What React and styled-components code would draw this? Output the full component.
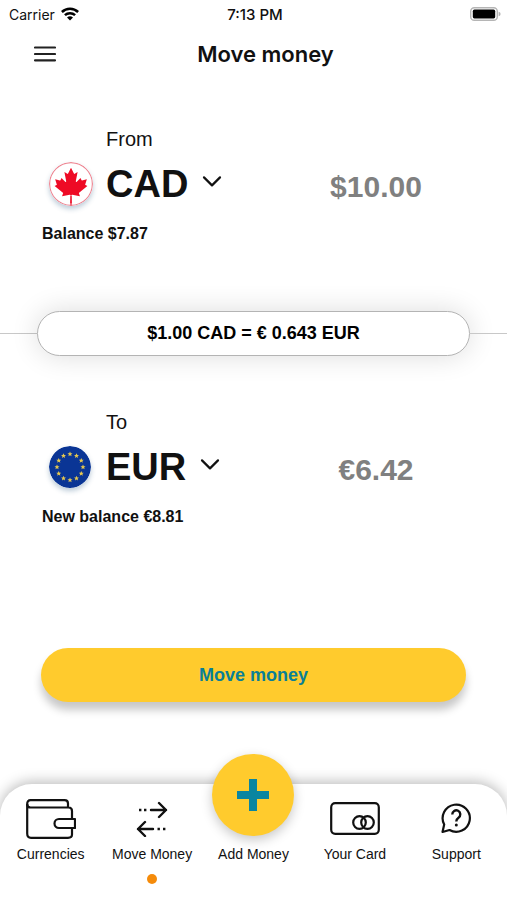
import { useState } from 'react';
import styled, { createGlobalStyle, css } from 'styled-components';

const colors = {
  ink: '#111111',
  muted: '#808080',
  line: '#b4b4b4',
  yellow: '#ffcb2d',
  teal: '#0a7f96',
  orange: '#f58b0a',
};

const GlobalStyle = createGlobalStyle`
  * {
    box-sizing: border-box;
  }
  body {
    margin: 0;
    background: #fff;
    color: ${colors.ink};
    font-family: 'Liberation Sans', Arial, sans-serif;
  }
  button,
  input,
  select {
    margin: 0;
    padding: 0;
    border: 0;
    background: none;
    color: inherit;
    font-family: inherit;
  }
`;

const Screen = styled.div`
  display: flex;
  flex-direction: column;
  min-height: 100vh;
  overflow: hidden;
`;

const StatusBar = styled.div`
  display: grid;
  grid-template-columns: 1fr auto 1fr;
  align-items: center;
  height: 28px;
  padding: 0 6px 0 9px;
  font-family: Inter, sans-serif;
  font-size: 14px;
`;

const Carrier = styled.div`
  display: flex;
  align-items: center;
  gap: 6px;
`;

const Time = styled.time`
  font-size: 15px;
  font-weight: 500;
`;

const Battery = styled.svg`
  justify-self: end;
`;

const Header = styled.header`
  display: grid;
  grid-template-columns: 32px 1fr 32px;
  align-items: center;
  height: 52px;
  padding: 0 29px;
`;

const MenuButton = styled.button`
  display: flex;
  justify-content: center;
  cursor: pointer;
`;

const Title = styled.h1`
  margin: 0 0 0 24px;
  font-family: Inter, sans-serif;
  font-size: 22px;
  font-weight: 600;
  line-height: 28px;
  text-align: center;
`;

const Main = styled.main`
  display: flex;
  flex-direction: column;
  flex: 1;
  padding: 47px 0 82px;
`;

const Account = styled.section`
  display: grid;
  grid-template-columns: 64px 1fr 180px;
  align-items: baseline;
  padding: 0 41px 0 42px;
`;

const Label = styled.label`
  grid-column: 2 / 4;
  margin-bottom: 9px;
  font-size: 20px;
  line-height: 24px;
`;

const FlagSvg = styled.svg`
  align-self: center;
  margin-left: 7px;
  border-radius: 50%;
  box-shadow: 0 3px 5px rgba(40, 90, 130, 0.3);
`;

const CurrencyPicker = styled.div`
  display: flex;
  align-items: baseline;
  gap: 14px;
  svg {
    align-self: center;
    pointer-events: none;
  }
`;

const CurrencySelect = styled.select`
  appearance: none;
  field-sizing: content;
  height: 48px;
  font-size: 38px;
  font-weight: 700;
  line-height: 48px;
  cursor: pointer;
`;

const Amount = styled.input`
  width: 100%;
  color: ${colors.muted};
  font-size: 30px;
  font-weight: 700;
  line-height: 36px;
  text-align: center;
`;

const Balance = styled.p`
  grid-column: 1 / 4;
  margin: 16px 0 0;
  font-size: 16px;
  font-weight: 700;
  line-height: 20px;
`;

const RateRow = styled.div`
  display: flex;
  align-items: center;
  margin: 67px 0 54px;
  &::before,
  &::after {
    content: '';
    width: 37px;
    height: 1px;
    background: #c8c8c8;
  }
`;

const Rate = styled.div`
  flex: 1;
  border: 1px solid ${colors.line};
  border-radius: 24px;
  background: #fff;
  box-shadow: 0 0 28px rgba(0, 0, 0, 0.14);
  color: #000;
  font-size: 18px;
  font-weight: 700;
  line-height: 43px;
  text-align: center;
`;

const SubmitButton = styled.button`
  margin: auto 41px 0;
  height: 54px;
  border-radius: 27px;
  background: ${colors.yellow};
  box-shadow: 0 8px 9px rgba(0, 0, 0, 0.22);
  color: ${colors.teal};
  font-size: 18px;
  font-weight: 700;
  cursor: pointer;
`;

const TabBar = styled.nav`
  display: grid;
  grid-template-columns: repeat(5, 1fr);
  height: 116px;
  border-radius: 32px 32px 0 0;
  background: #fff;
  box-shadow: 0 -2px 14px rgba(0, 0, 0, 0.28);
`;

const Tab = styled.a`
  display: flex;
  flex-direction: column;
  align-items: center;
  color: ${colors.ink};
  font-size: 14px;
  line-height: 18px;
  text-decoration: none;
  white-space: nowrap;
  ${({ $active }) =>
    $active &&
    css`
      &::after {
        content: '';
        width: 10px;
        height: 10px;
        margin-top: 11px;
        border-radius: 50%;
        background: ${colors.orange};
      }
    `}
`;

const TabIcon = styled.span`
  display: flex;
  align-items: center;
  justify-content: center;
  height: 61px;
  padding-top: 8px;
`;

const AddCircle = styled.span`
  display: flex;
  align-items: center;
  justify-content: center;
  width: 82px;
  height: 82px;
  margin: -30px 0 9px;
  border-radius: 50%;
  background: ${colors.yellow};
  box-shadow: 0 4px 12px rgba(0, 0, 0, 0.22);
`;

const WifiIcon = () => (
  <svg width="18" height="14" viewBox="0 0 18 14" aria-hidden="true">
    <g fill="none" stroke="#000" strokeWidth="2.5">
      <path d="M0.9 5a11.6 11.6 0 0 1 16.2 0" />
      <path d="M3.9 8.2a7.4 7.4 0 0 1 10.2 0" />
    </g>
    <path d="M9 13.6 6 10.6a4.3 4.3 0 0 1 6 0z" />
  </svg>
);

const BatteryIcon = () => (
  <Battery width="31" height="14" viewBox="0 0 31 14" aria-label="Battery full">
    <rect x="0.7" y="0.7" width="26.6" height="12.6" rx="3.6" fill="#fff" stroke="#b5b5b5" strokeWidth="1.4" />
    <rect x="2.8" y="2.6" width="22.4" height="8.8" rx="1.6" />
    <path d="M28.6 4.8q2 .5 2 2.2t-2 2.2z" fill="#b5b5b5" />
  </Battery>
);

const MenuIcon = () => (
  <svg width="22" height="18" viewBox="0 0 22 18" aria-hidden="true">
    <path d="M1 2.5h20M1 9h20M1 15.3h20" stroke="#222" strokeWidth="2.2" strokeLinecap="round" />
  </svg>
);

const ChevronIcon = () => (
  <svg width="20" height="20" viewBox="0 0 20 20" aria-hidden="true">
    <path
      d="M2 3.4 10 11.4 18 3.4"
      fill="none"
      stroke={colors.ink}
      strokeWidth="2.2"
      strokeLinecap="round"
      strokeLinejoin="round"
    />
  </svg>
);

const CanadaFlag = () => (
  <FlagSvg width="44" height="44" viewBox="0 0 44 44" aria-hidden="true">
    <circle cx="22" cy="22" r="21.4" fill="#fff" stroke="#ee8592" strokeWidth="1.2" />
    <path d="M22 34v9.4" stroke="#e8344a" strokeWidth="1.3" />
    <path
      transform="translate(22 23.4) scale(.0088)"
      fill="#ee0a25"
      d="m-90 2030 45-863a95 95 0 0 0-111-98l-859 151 116-320a65 65 0 0 0-20-73l-941-762 212-99a65 65 0 0 0 34-79l-186-572 542 115a65 65 0 0 0 73-38l105-247 423 454a65 65 0 0 0 111-57l-204-1052 327 189a65 65 0 0 0 91-27l332-652 332 652a65 65 0 0 0 91 27l327-189-204 1052a65 65 0 0 0 111 57l423-454 105 247a65 65 0 0 0 73 38l542-115-186 572a65 65 0 0 0 34 79l212 99-941 762a65 65 0 0 0-20 73l116 320-859-151a95 95 0 0 0-111 98l45 863z"
    />
  </FlagSvg>
);

const STAR = 'M0-2.6.8-.8 2.5-.8 1.1.5 1.6 2.200 0 1.200-1.600 2.200-1.100.5-2.500-.8-.8-.8z';

const EuropeFlag = () => (
  <FlagSvg width="42" height="42" viewBox="0 0 42 42" aria-hidden="true">
    <circle cx="21" cy="21" r="21" fill="#0a3595" />
    {Array.from({ length: 12 }, (_, i) => {
      const angle = (i * Math.PI) / 6;
      const x = 21 + 13 * Math.sin(angle);
      const y = 21 - 13 * Math.cos(angle);
      return <path key={i} d={STAR} transform={`translate(${x} ${y})`} fill="#e6c84f" />;
    })}
  </FlagSvg>
);

const WalletIcon = () => (
  <svg width="50" height="40" viewBox="0 0 50 40" fill="none" stroke="#111" strokeWidth="2.2" aria-hidden="true">
    <path d="M46 20.5V12Q46 8.500 42.500 8.500H4.500Q1.200 8.500 1.200 5 1.200 1.200 4.500 1.200H38.500Q42 1.200 42 4.500V8.500" />
    <path d="M1.200 5V34.500Q1.200 38.800 5 38.800H42Q46 38.800 46 35.500V29" />
    <path d="M49 20H33a4.500 4.500 0 0 0 0 9H49z" strokeLinejoin="round" />
  </svg>
);

const TransferIcon = () => (
  <svg width="32" height="36" viewBox="0 0 32 36" fill="none" stroke="#111" strokeWidth="2.4" aria-hidden="true">
    <path d="M15 9H30M23 2l7 7-7 7M17 28H2M9 21l-7 7 7 7" strokeLinecap="round" strokeLinejoin="round" />
    <path d="M3 9h2.400M8 9h2.400M21.500 28h2.400M27 28h2.400" />
  </svg>
);

const CardIcon = () => (
  <svg width="50" height="33" viewBox="0 0 50 33" fill="none" stroke="#111" strokeWidth="2.2" aria-hidden="true">
    <rect x="1.2" y="1.2" width="47.6" height="30.6" rx="4" />
    <circle cx="29.500" cy="20.500" r="6.300" />
    <circle cx="37.500" cy="20.500" r="6.300" />
  </svg>
);

const SupportIcon = () => (
  <svg width="30" height="31" viewBox="0 0 30 31" fill="none" stroke="#111" strokeWidth="2.2" aria-hidden="true">
    <path d="M3.200 21.500A13.600 13.600 0 1 1 8.500 27L1.500 29z" strokeLinejoin="round" />
    <path d="M11.300 11.500a4 4 0 1 1 6.200 3.200Q15.300 16.200 15.300 18.600" strokeWidth="2.400" />
    <circle cx="15.300" cy="22" r="1.500" fill="#111" stroke="none" />
  </svg>
);

const PlusIcon = () => (
  <svg width="34" height="34" viewBox="0 0 34 34" aria-hidden="true">
    <path d="M17 1v32M1 17h32" stroke="#0a85a0" strokeWidth="8" />
  </svg>
);

const tabs = [
  { label: 'Currencies', icon: <WalletIcon /> },
  { label: 'Move Money', icon: <TransferIcon />, active: true },
  { label: 'Add Money', primary: true },
  { label: 'Your Card', icon: <CardIcon /> },
  { label: 'Support', icon: <SupportIcon /> },
];

const CurrencyAccount = ({ id, label, flag, currency, amount, balance }) => {
  const [code, setCode] = useState(currency);
  const [value, setValue] = useState(amount);

  return (
    <Account>
      <Label htmlFor={id}>{label}</Label>
      {flag}
      <CurrencyPicker>
        <CurrencySelect id={id} value={code} onChange={(e) => setCode(e.target.value)}>
          <option>CAD</option>
          <option>EUR</option>
        </CurrencySelect>
        <ChevronIcon />
      </CurrencyPicker>
      <Amount
        type="text"
        aria-label={`${label} amount`}
        value={value}
        onChange={(e) => setValue(e.target.value)}
      />
      <Balance>{balance}</Balance>
    </Account>
  );
};

const App = () => {
  return (
    <Screen>
      <GlobalStyle />
      <StatusBar>
        <Carrier>
          Carrier
          <WifiIcon />
        </Carrier>
        <Time>7:13 PM</Time>
        <BatteryIcon />
      </StatusBar>
      <Header>
        <MenuButton type="button" aria-label="Menu">
          <MenuIcon />
        </MenuButton>
        <Title>Move money</Title>
      </Header>

      <Main>
        <CurrencyAccount
          id="from"
          label="From"
          flag={<CanadaFlag />}
          currency="CAD"
          amount="$10.00"
          balance="Balance $7.87"
        />
        <RateRow>
          <Rate>$1.00 CAD = € 0.643 EUR</Rate>
        </RateRow>
        <CurrencyAccount
          id="to"
          label="To"
          flag={<EuropeFlag />}
          currency="EUR"
          amount="€6.42"
          balance="New balance €8.81"
        />
        <SubmitButton type="button">Move money</SubmitButton>
      </Main>

      <TabBar>
        {tabs.map(({ label, icon, active, primary }) => (
          <Tab key={label} href="#" $active={active} aria-current={active ? 'page' : undefined}>
            {primary ? (
              <AddCircle>
                <PlusIcon />
              </AddCircle>
            ) : (
              <TabIcon>{icon}</TabIcon>
            )}
            {label}
          </Tab>
        ))}
      </TabBar>
    </Screen>
  );
};

export default App;
